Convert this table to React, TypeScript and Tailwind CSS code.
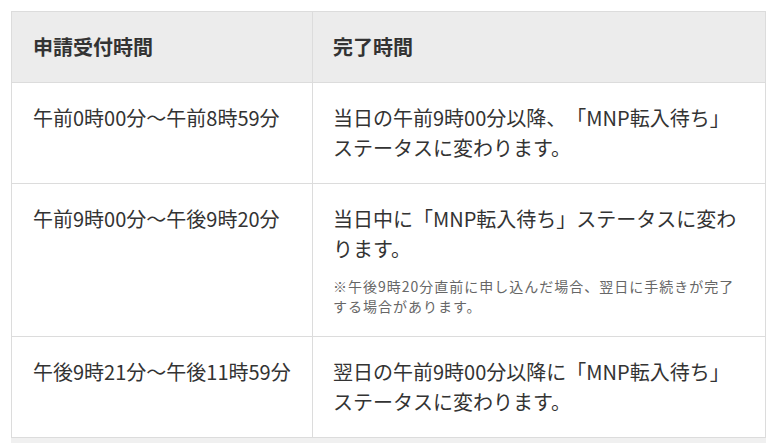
import React from "react";

const font = { fontFamily: '"Noto Sans CJK JP", "Noto Sans", sans-serif' };

export default function App() {
  const rows = [
    {
      a: "午前0時00分〜午前8時59分",
      b: "当日の午前9時00分以降、「MNP転入待ち」ステータスに変わります。",
    },
    {
      a: "午前9時00分〜午後9時20分",
      b: "当日中に「MNP転入待ち」ステータスに変わります。",
      note: "※午後9時20分直前に申し込んだ場合、翌日に手続きが完了する場合があります。",
    },
    {
      a: "午後9時21分〜午後11時59分",
      b: "翌日の午前9時00分以降に「MNP転入待ち」ステータスに変わります。",
    },
  ];
  return (
    <div
      className="bg-white w-[775px] h-[443px] overflow-hidden pt-[11px] pl-[11px] [text-spacing-trim:space-all]"
      style={font}
    >
      <table className="w-[755px] border-collapse text-[20px] leading-[30px] text-[#333]">
        <thead>
          <tr className="bg-[#ececec]">
            <th className="w-[301px] border border-[#dcdcdc] px-[21px] py-[20px] text-left font-bold">申請受付時間</th>
            <th className="border border-[#dcdcdc] px-[20px] py-[20px] text-left font-bold">完了時間</th>
          </tr>
        </thead>
        <tbody>
          {rows.map((r, i) => (
            <tr key={i}>
              <td className="border border-[#dcdcdc] px-[21px] py-[20px] align-top">{r.a}</td>
              <td className="border border-[#dcdcdc] px-[20px] py-[20px] align-top">
                <div>{r.b}</div>
                {r.note && (
                  <div className="mt-[12px] text-[14px] leading-[20px] tracking-[1px] text-[#666]">{r.note}</div>
                )}
              </td>
            </tr>
          ))}
        </tbody>
      </table>
      <div className="w-[755px] h-[10px] bg-[#f0f0f0]" />
    </div>
  );
}
